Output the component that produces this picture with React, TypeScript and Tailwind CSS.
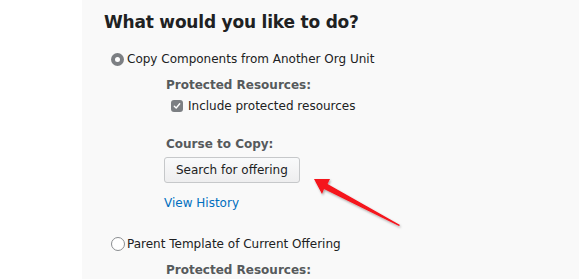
import React from "react";

function Radio({ checked }: { checked?: boolean }) {
  return checked ? (
    <span className="w-[13px] h-[13px] rounded-full bg-[#7c7f83] flex items-center justify-center shrink-0">
      <span className="w-[5px] h-[5px] rounded-full bg-white" />
    </span>
  ) : (
    <span className="w-[14px] h-[14px] rounded-full border border-[#8a8d90] bg-white shrink-0" />
  );
}

function Checkbox() {
  return (
    <span className="w-[12px] h-[12px] rounded-[3px] bg-[#7c7f83] flex items-center justify-center shrink-0">
      <svg width="8" height="8" viewBox="0 0 8 8" fill="none">
        <path d="M1.3 4.2 L3.2 6 L6.7 1.8" stroke="white" strokeWidth="1.4" strokeLinecap="round" strokeLinejoin="round" />
      </svg>
    </span>
  );
}

function Arrow() {
  return (
    <svg className="absolute left-[300px] top-[165px]" width="110" height="70" viewBox="0 0 110 70">
      <defs>
        <filter id="sh" x="-20%" y="-20%" width="140%" height="140%">
          <feDropShadow dx="1" dy="1.5" stdDeviation="1" floodColor="#000" floodOpacity="0.35" />
        </filter>
      </defs>
      <polygon
        filter="url(#sh)"
        fill="#f5121a"
        points="14,14 30,14 27.5,19 100,60 99,61 24,24 22,29"
      />
    </svg>
  );
}

export default function App() {
  return (
    <div className="relative flex w-[579px] h-[279px] overflow-hidden bg-white font-['DejaVu_Sans',sans-serif]">
      <div className="w-[82px] shrink-0 bg-white" />
      <div className="flex-1 bg-[#f9f9f9] pl-[22px] pt-[10px]">
        <h2 className="text-[17px] leading-[24px] font-bold tracking-[-0.2px] text-[#202122]">What would you like to do?</h2>

        <div className="mt-[17px] ml-[7px] flex items-center gap-[3px] text-[12px] leading-[16px] text-[#202122]">
          <Radio checked />
          <span>Copy Components from Another Org Unit</span>
        </div>

        <div className="ml-[62px]">
          <p className="mt-[10px] text-[12px] leading-[16px] font-bold text-[#565a5c]">Protected Resources:</p>
          <div className="mt-[5px] ml-[5px] flex items-center gap-[5px] text-[12px] leading-[16px] text-[#202122]">
            <Checkbox />
            <span>Include protected resources</span>
          </div>

          <p className="mt-[22px] text-[12px] leading-[16px] font-bold text-[#565a5c]">Course to Copy:</p>
          <button className="mt-[5px] -ml-[2px] h-[26px] px-[11px] rounded-[3px] border border-[#c6c8ca] bg-gradient-to-b from-[#f9fafb] to-[#eeeeef] text-[12px] text-[#202122]">
            Search for offering
          </button>
          <p className="mt-[12px] -ml-[2px] text-[12px] leading-[16px] text-[#006fbf]">View History</p>
        </div>

        <div className="mt-[25px] ml-[7px] flex items-center gap-[2px] text-[12px] leading-[16px] text-[#202122]">
          <Radio />
          <span>Parent Template of Current Offering</span>
        </div>
        <p className="mt-[10px] ml-[62px] text-[12px] leading-[16px] font-bold text-[#565a5c]">Protected Resources:</p>
      </div>
      <Arrow />
    </div>
  );
}
